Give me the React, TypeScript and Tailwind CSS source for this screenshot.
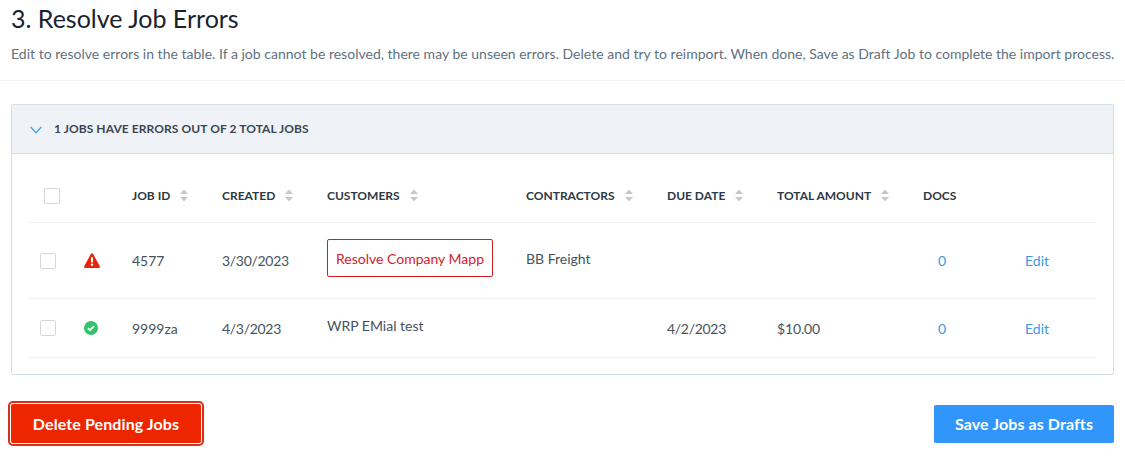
import React from 'react'

const cols = 'grid grid-cols-[57px_48px_90px_105px_199px_141px_110px_146px_102px_72px]'

function SortArrows() {
  return (
    <svg width="8" height="13" viewBox="0 0 8 13" className="ml-[10px] shrink-0">
      <path d="M4 0.5L8 5H0Z" fill="#c4c8cc" />
      <path d="M4 12.5L8 8H0Z" fill="#c4c8cc" />
    </svg>
  )
}

function Checkbox() {
  return <div className="w-4 h-4 rounded-[2px] border border-[#d5d9dd] bg-white" />
}

function Th({ label, sort = true }: { label: string; sort?: boolean }) {
  return (
    <div className="flex items-center text-[12px] font-bold text-[#2d3944]">
      <span>{label}</span>
      {sort && <SortArrows />}
    </div>
  )
}

function WarnIcon() {
  return (
    <svg width="16" height="15" viewBox="0 0 16 14" preserveAspectRatio="none">
      <path d="M8 0.3c.5 0 .9.25 1.15.7l6.5 11.2c.5.85-.1 1.8-1.1 1.8H1.45c-1 0-1.6-.95-1.1-1.8L6.85 1c.25-.45.65-.7 1.15-.7z" fill="#e8240c" />
      <rect x="7" y="3.8" width="2" height="5" rx="0.6" fill="#fff" />
      <circle cx="8" cy="11" r="1.15" fill="#fff" />
    </svg>
  )
}

function OkIcon() {
  return (
    <svg width="14" height="14" viewBox="0 0 14 14">
      <circle cx="7" cy="7" r="7" fill="#2ec56b" />
      <path d="M3.9 7.2L6 9.2L10.1 5.1" fill="none" stroke="#fff" strokeWidth="1.9" />
    </svg>
  )
}

export default function App() {
  return (
    <div className="w-[1125px] h-[458px] bg-white overflow-hidden font-['Lato','Liberation_Sans',sans-serif] text-[#46525d]">
      <div className="px-[11px] pt-[3px] h-[81px] border-b border-[#f1f3f5]">
        <h1 className="text-[25px] leading-[30px] text-[#18232d]">3. Resolve Job Errors</h1>
        <p className="mt-[12px] text-[14px] leading-[18px] tracking-[0.012px] text-[#61717f] whitespace-nowrap">
          Edit to resolve errors in the table. If a job cannot be resolved, there may be unseen errors. Delete and try to reimport. When done, Save as Draft Job to complete the import process.
        </p>
      </div>

      <div className="mx-[11px] mt-[23px] h-[271px] w-[1103px] rounded-[2px] border border-[#d6dfe6]">
        <div className="h-[49px] bg-[#eff3f8] border-b border-[#d6dfe6] flex items-center pl-[18px]">
          <svg width="12" height="8" viewBox="0 0 12 8" className="mt-[1px]">
            <path d="M0.7 1L6 6.8L11.3 1" fill="none" stroke="#3d9be9" strokeWidth="1.2" />
          </svg>
          <span className="ml-[12px] text-[12px] tracking-[0.08px] font-bold text-[#3a4652]">1 JOBS HAVE ERRORS OUT OF 2 TOTAL JOBS</span>
        </div>

        <div className="ml-[15px] mr-[16px]">
          <div className={`${cols} h-[69px] items-center border-b border-[#f0f2f4] pt-[15px]`}>
            <div className="pl-[17px]"><Checkbox /></div>
            <div />
            <Th label="JOB ID" />
            <Th label="CREATED" />
            <Th label="CUSTOMERS" />
            <Th label="CONTRACTORS" />
            <Th label="DUE DATE" />
            <Th label="TOTAL AMOUNT" />
            <Th label="DOCS" sort={false} />
            <div />
          </div>

          <div className={`${cols} h-[76px] items-center border-b border-[#f0f2f4] text-[14px]`}>
            <div className="pl-[13px]"><Checkbox /></div>
            <WarnIcon />
            <div>4577</div>
            <div className="tracking-[-0.3px]">3/30/2023</div>
            <div className="w-[166px] h-[38px] pt-[2px] flex items-center justify-center rounded-[2px] border border-[#cf2027] text-[#d3222a] -mt-[6px]">Resolve Company Mapp</div>
            <div className="-mt-[5px]">BB Freight</div>
            <div />
            <div />
            <div className="pl-[15px] text-[#3e97e5]">0</div>
            <div className="text-[#3e97e5]">Edit</div>
          </div>

          <div className={`${cols} h-[59px] items-center border-b border-[#f0f2f4] text-[14px]`}>
            <div className="pl-[13px]"><Checkbox /></div>
            <OkIcon />
            <div className="mt-[1px]">9999za</div>
            <div className="mt-[1px] tracking-[-0.3px]">4/3/2023</div>
            <div className="-mt-[5px]">WRP EMial test</div>
            <div />
            <div className="mt-[1px] tracking-[-0.3px]">4/2/2023</div>
            <div className="mt-[1px] tracking-[-0.15px]">$10.00</div>
            <div className="pl-[15px] mt-[1px] text-[#3e97e5]">0</div>
            <div className="mt-[1px] text-[#3e97e5]">Edit</div>
          </div>
        </div>
      </div>

      <div className="mx-[11px] mt-[29px] w-[1103px] flex items-end justify-between">
        <button className="w-[190px] h-[39px] rounded-[2px] bg-[#ee2600] text-white text-[16px] tracking-[0.1px] font-bold outline-2 outline-offset-1 outline-[#d4301c]">
          Delete Pending Jobs
        </button>
        <button className="w-[180px] h-[38px] rounded-[2px] bg-[#3096fb] text-white text-[16px] tracking-[0.1px] font-bold">
          Save Jobs as Drafts
        </button>
      </div>
    </div>
  )
}
